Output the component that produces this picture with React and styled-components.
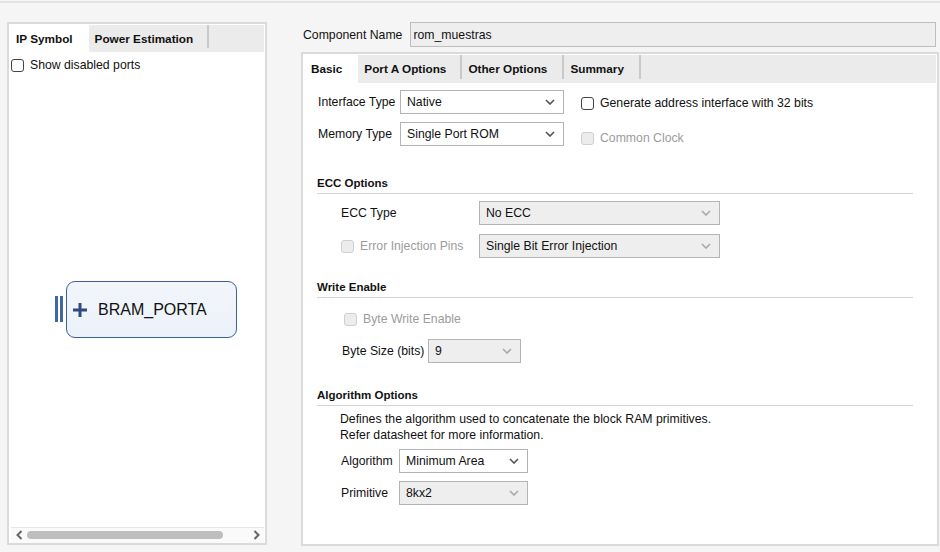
import React from "react";
import styled, { createGlobalStyle } from "styled-components";

const Global = createGlobalStyle`
  html, body { margin: 0; padding: 0; }
  body {
    background: #f5f5f5;
    font-family: "Liberation Sans", Arial, sans-serif;
    font-size: 12.25px;
    color: #111;
    width: 940px;
    height: 552px;
    overflow: hidden;
  }
`;

const Page = styled.div`
  width: 940px;
  height: 552px;
  box-sizing: border-box;
  border-top: 1px solid #f5f5f5;
`;

const TopRule = styled.div`
  height: 2px;
  background: #e4e4e4;
`;

const Main = styled.div`
  display: flex;
  padding: 19px 0 0 7px;
  gap: 34px;
`;

const Panel = styled.div`
  box-sizing: border-box;
  border: 2px solid #dadada;
  background: #fff;
  display: flex;
  flex-direction: column;
  width: ${(p) => p.$w}px;
  height: ${(p) => p.$h}px;
  padding: 1px 1px 0 1px;
`;

const TabStrip = styled.div`
  display: flex;
  height: ${(p) => p.$h || 27}px;
  background: #ebebeb;
  flex-shrink: 0;
`;

const Tab = styled.div`
  display: flex;
  align-items: center;
  padding: 0 ${(p) => (p.$active ? (p.$pr || 14) : (p.$pr || 14) + 2)}px 1px ${(p) => p.$pl || 6}px;
  font-weight: bold;
  font-size: 11.75px;
  background: ${(p) => (p.$active ? "#fff" : "transparent")};
  position: relative;
  &::after {
    content: "";
    display: ${(p) => (p.$active ? "none" : "block")};
    position: absolute;
    right: 0;
    top: 0;
    bottom: 4px;
    width: 2px;
    background: #c9c9c9;
  }
`;

const CheckRow = styled.label`
  display: flex;
  align-items: center;
  gap: 6px;
  color: ${(p) => (p.$disabled ? "#9c9c9c" : "#111")};
  height: 16px;
`;

const Box = styled.span`
  width: 13px;
  height: 13px;
  box-sizing: border-box;
  border: 1px solid ${(p) => (p.$disabled ? "#cfcfcf" : "#444")};
  background: ${(p) => (p.$disabled ? "#ececec" : "#fff")};
  border-radius: 3px;
  flex-shrink: 0;
`;

const SymbolArea = styled.div`
  flex: 1;
  display: flex;
  flex-direction: column;
  padding: 5px 0 0 1px;
`;

const Canvas = styled.div`
  flex: 1;
  display: flex;
  align-items: flex-start;
  padding: 208px 0 0 44px;
`;

const Port = styled.div`
  display: flex;
  gap: 2px;
  margin-top: 15px;
  margin-right: 3px;
`;

const PortBar = styled.span`
  width: 3px;
  height: 26px;
  background: #3f6aa1;
`;

const Block = styled.div`
  width: 171px;
  height: 57px;
  box-sizing: border-box;
  border: 1px solid #3d5f9e;
  border-radius: 9px;
  background: linear-gradient(#f2f5fa, #ecf2fb);
  display: flex;
  align-items: center;
  padding-left: 5px;
  gap: 10px;
  font-size: 16px;
  color: #111;
`;

const HScroll = styled.div`
  height: 14px;
  border-top: 1px solid #e6e6e6;
  background: #fafafa;
  display: flex;
  align-items: center;
  padding: 0 4px 1px 5px;
  gap: 4px;
`;

const Thumb = styled.div`
  width: 196px;
  height: 8px;
  border-radius: 4px;
  background: #bebebe;
`;

const Spacer = styled.div`
  flex: 1;
`;

const RightCol = styled.div`
  display: flex;
  flex-direction: column;
  gap: 5px;
`;

const NameRow = styled.div`
  display: flex;
  align-items: center;
  gap: 8px;
  padding-left: 2px;
`;

const NameInput = styled.div`
  width: 526px;
  height: 25px;
  box-sizing: border-box;
  border: 1px solid #bdbdbd;
  background: #eeeeee;
  display: flex;
  align-items: center;
  padding-left: 2px;
`;

const Content = styled.div`
  flex: 1;
  display: flex;
  flex-direction: column;
  padding: 7px 23px 0 13px;
`;

const TopBlock = styled.div`
  display: flex;
  gap: 17px;
  padding-left: 1px;
`;

const FormGrid = styled.div`
  display: grid;
  grid-template-columns: ${(p) => p.$cols};
  row-gap: ${(p) => p.$gap}px;
  align-items: center;
`;

const Label = styled.span`
  color: ${(p) => (p.$disabled ? "#9c9c9c" : "#111")};
`;

const SelectBox = styled.div`
  width: ${(p) => p.$w}px;
  height: ${(p) => p.$h || 24}px;
  box-sizing: border-box;
  border: 1px solid #b4b4b4;
  background: ${(p) => (p.$grey ? "#eeeeee" : "#fff")};
  display: flex;
  align-items: center;
  justify-content: space-between;
  padding: 0 8px 0 6px;
`;

const ChecksCol = styled.div`
  display: flex;
  flex-direction: column;
  gap: 19px;
  padding-top: 5px;
`;

const SectionHead = styled.div`
  margin-top: ${(p) => p.$mt}px;
  padding: 0 0 2px 0;
  border-bottom: 1px solid #d2d2d2;
  font-weight: bold;
  font-size: 11.5px;
  line-height: 16px;
`;

const Indented = styled.div`
  padding-left: ${(p) => p.$pl}px;
  margin-top: ${(p) => p.$mt}px;
`;

const Para = styled.div`
  line-height: 16px;
`;

const Chevron = ({ dim }) => (
  <svg width="10" height="6" viewBox="0 0 10 6">
    <path d="M1 1 L5 5 L9 1" fill="none" stroke={dim ? "#a8a8a8" : "#555"} strokeWidth="1.6" />
  </svg>
);

const Select = ({ w, value, grey, dim, h }) => (
  <SelectBox $w={w} $grey={grey} $h={h}>
    <span>{value}</span>
    <Chevron dim={dim} />
  </SelectBox>
);

const Check = ({ children, disabled }) => (
  <CheckRow $disabled={disabled}>
    <Box $disabled={disabled} />
    {children}
  </CheckRow>
);

const Arrow = ({ dir }) => (
  <svg width="7" height="10" viewBox="0 0 7 10">
    <path
      d={dir === "l" ? "M5.5 1 L1.5 5 L5.5 9" : "M1.5 1 L5.5 5 L1.5 9"}
      fill="none"
      stroke="#666"
      strokeWidth="2"
    />
  </svg>
);

const Plus = () => (
  <svg width="16" height="16" viewBox="0 0 16 16">
    <path d="M8 1 V15 M1 8 H15" stroke="#2d4b7f" strokeWidth="3" />
  </svg>
);

export default function App() {
  return (
    <Page>
      <Global />
      <TopRule />
      <Main>
        <Panel $w={260} $h={523}>
          <TabStrip>
            <Tab $active $pr={16}>IP Symbol</Tab>
            <Tab $pr={14}>Power Estimation</Tab>
          </TabStrip>
          <SymbolArea>
            <Check>Show disabled ports</Check>
            <Canvas>
              <Port>
                <PortBar />
                <PortBar />
              </Port>
              <Block>
                <Plus />
                BRAM_PORTA
              </Block>
            </Canvas>
            <HScroll>
              <Arrow dir="l" />
              <Thumb />
              <Spacer />
              <Arrow dir="r" />
            </HScroll>
          </SymbolArea>
        </Panel>

        <RightCol>
          <NameRow>
            <span>Component Name</span>
            <NameInput>rom_muestras</NameInput>
          </NameRow>
          <Panel $w={638} $h={494}>
            <TabStrip $h={28}>
              <Tab $active $pl={7} $pr={16}>Basic</Tab>
              <Tab>Port A Options</Tab>
              <Tab $pr={15}>Other Options</Tab>
              <Tab $pr={15}>Summary</Tab>
            </TabStrip>
            <Content>
              <TopBlock>
                <FormGrid $cols="82px 164px" $gap={7}>
                  <Label>Interface Type</Label>
                  <Select w={164} value="Native" />
                  <Label>Memory Type</Label>
                  <Select w={164} value="Single Port ROM" />
                </FormGrid>
                <ChecksCol>
                  <Check>Generate address interface with 32 bits</Check>
                  <Check disabled>Common Clock</Check>
                </ChecksCol>
              </TopBlock>

              <SectionHead $mt={29}>ECC Options</SectionHead>
              <Indented $pl={24} $mt={7}>
                <FormGrid $cols="138px 241px" $gap={9}>
                  <Label>ECC Type</Label>
                  <Select w={241} value="No ECC" grey dim />
                  <Check disabled>Error Injection Pins</Check>
                  <Select w={241} value="Single Bit Error Injection" grey dim />
                </FormGrid>
              </Indented>

              <SectionHead $mt={21}>Write Enable</SectionHead>
              <Indented $pl={27} $mt={13}>
                <Check disabled>Byte Write Enable</Check>
              </Indented>
              <Indented $pl={25} $mt={12}>
                <FormGrid $cols="86px 93px" $gap={8}>
                  <Label>Byte Size (bits)</Label>
                  <Select w={93} value="9" grey dim />
                </FormGrid>
              </Indented>

              <SectionHead $mt={24}>Algorithm Options</SectionHead>
              <Indented $pl={23} $mt={5}>
                <Para>Defines the algorithm used to concatenate the block RAM primitives.</Para>
                <Para>Refer datasheet for more information.</Para>
              </Indented>
              <Indented $pl={24} $mt={6}>
                <FormGrid $cols="58px 129px" $gap={8}>
                  <Label>Algorithm</Label>
                  <Select w={129} value="Minimum Area" />
                  <Label>Primitive</Label>
                  <Select w={129} value="8kx2" grey dim />
                </FormGrid>
              </Indented>
            </Content>
          </Panel>
        </RightCol>
      </Main>
    </Page>
  );
}
